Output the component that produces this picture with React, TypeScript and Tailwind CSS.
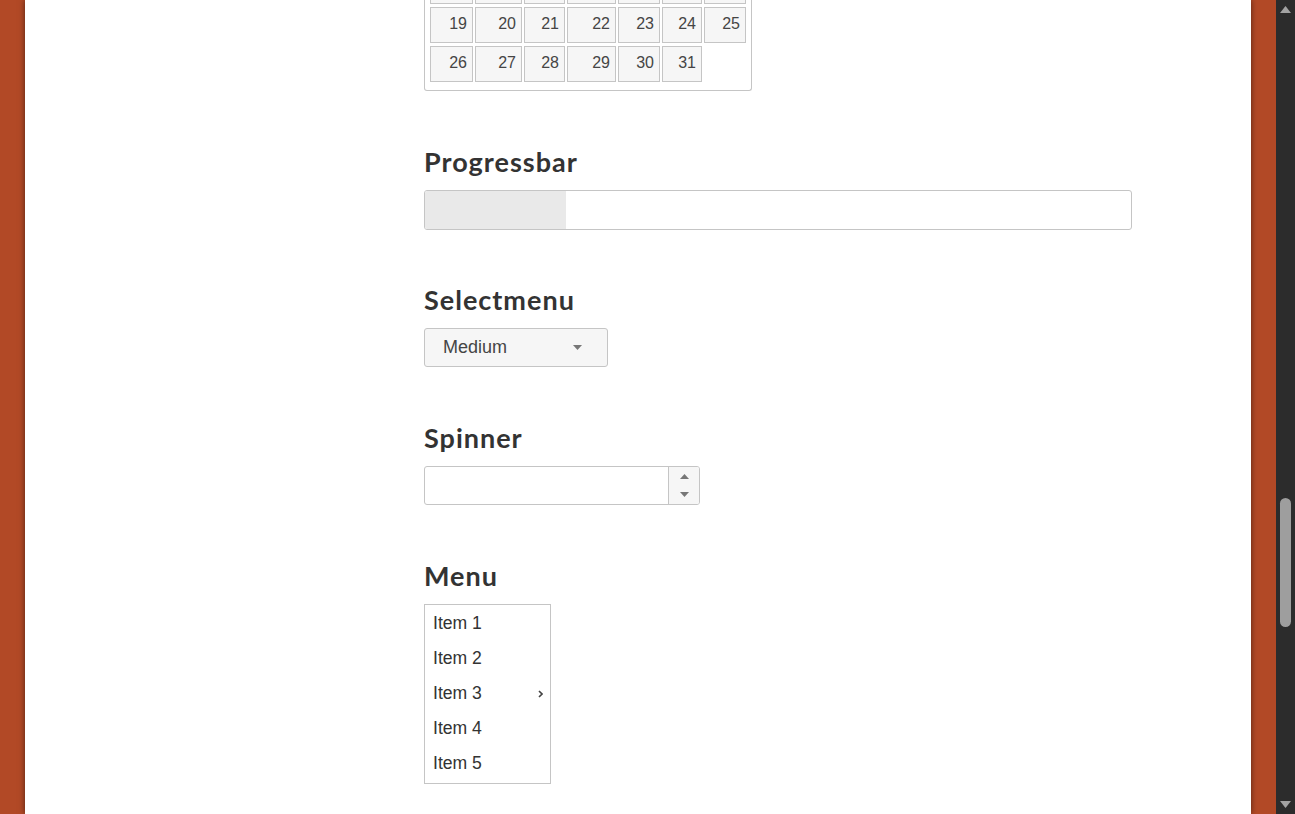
const prevRow = ["12", "13", "14", "15", "16", "17", "18"];
const rows = [
  prevRow,
  ["19", "20", "21", "22", "23", "24", "25"],
  ["26", "27", "28", "29", "30", "31", ""],
];

const menuItems = ["Item 1", "Item 2", "Item 3", "Item 4", "Item 5"];

const Heading = ({ children, tight }: { children: React.ReactNode; tight?: boolean }) => (
  <h2
    className={
      tight
        ? "mt-[55px] mb-[13px] text-[27px] leading-[30px] font-bold tracking-[1px] text-[#333] font-['Lato',sans-serif]"
        : "mt-[56px] mb-[13px] text-[27px] leading-[30px] font-bold tracking-[1px] text-[#333] font-['Lato',sans-serif]"
    }
  >
    {children}
  </h2>
);

const Caret = ({ up }: { up?: boolean }) => (
  <svg width="9" height="5" viewBox="0 0 9 5" className="block">
    <path d={up ? "M0 5 L4.5 0 L9 5 Z" : "M0 0 L9 0 L4.5 5 Z"} fill="#777" />
  </svg>
);

const Calendar = () => (
  <div className="mt-[-32px] w-[328px] rounded-b-[3px] border border-t-0 border-[#c5c5c5] pl-[5px] pb-[8px]">
    <div className="grid grid-cols-[43px_47px_41px_49px_42px_40px_42px] gap-x-[2px] gap-y-[3px]">
      {rows.flat().map((d, i) =>
        d ? (
          <div
            key={i}
            className="flex h-[36px] items-center justify-end border border-[#c5c5c5] bg-[#f6f6f6] pr-[5px] pb-[2px] text-[16px] text-[#454545]"
          >
            {d}
          </div>
        ) : (
          <div key={i} />
        )
      )}
    </div>
  </div>
);

export default function App() {
  return (
    <div className="flex h-[814px] w-full overflow-hidden bg-[#b24926] font-['Liberation_Sans',Arial,sans-serif]">
      <div className="w-[25px] shrink-0" />
      <div className="relative h-full flex-1 overflow-hidden bg-white pl-[399px] shadow-[0_0_6px_rgba(0,0,0,0.55)]">
        <Calendar />

        <Heading>Progressbar</Heading>
        <div className="flex h-[40px] w-[708px] overflow-hidden rounded-[3px] border border-[#c5c5c5] bg-white">
          <div className="h-full w-[141px] bg-[#e9e9e9]" />
        </div>

        <Heading tight>Selectmenu</Heading>
        <div className="flex h-[39px] w-[184px] items-center justify-between rounded-[3px] border border-[#c5c5c5] bg-[#f6f6f6] pl-[18px] pr-[25px] text-[18px] text-[#454545]">
          <span>Medium</span>
          <Caret />
        </div>

        <Heading>Spinner</Heading>
        <div className="flex h-[39px] w-[276px] overflow-hidden rounded-[3px] border border-[#c5c5c5] bg-white">
          <div className="flex-1" />
          <div className="flex w-[31px] flex-col items-center justify-center gap-[13px] border-l border-[#c5c5c5] bg-[#f6f6f6]">
            <Caret up />
            <Caret />
          </div>
        </div>

        <Heading>Menu</Heading>
        <div className="w-[127px] border border-[#c5c5c5] bg-white pt-[1px] pb-[2px] text-[17.6px] text-[#333]">
          {menuItems.map((item, i) => (
            <div key={item} className="flex h-[35px] items-center justify-between pl-[8px] pr-[7px]">
              <span>{item}</span>
              {i === 2 && (
                <svg width="5" height="8" viewBox="0 0 5 8">
                  <path d="M1 1 L4 4 L1 7" stroke="#444" strokeWidth="1.6" fill="none" />
                </svg>
              )}
            </div>
          ))}
        </div>
      </div>
      <div className="w-[25px] shrink-0" />
      <div className="flex w-[19px] shrink-0 flex-col items-center justify-between bg-[#2c2c2c] py-[5px]">
        <svg width="11" height="8" viewBox="0 0 11 8">
          <path d="M0 8 L5.5 1 L11 8 Z" fill="#a3a3a3" />
        </svg>
        <div className="flex w-full flex-1 flex-col items-center">
          <div className="h-[485px] shrink-0" />
          <div className="h-[129px] w-[11px] rounded-full bg-[#9e9e9e]" />
        </div>
        <svg width="11" height="8" viewBox="0 0 11 8">
          <path d="M0 0 L11 0 L5.5 7 Z" fill="#a3a3a3" />
        </svg>
      </div>
    </div>
  );
}
